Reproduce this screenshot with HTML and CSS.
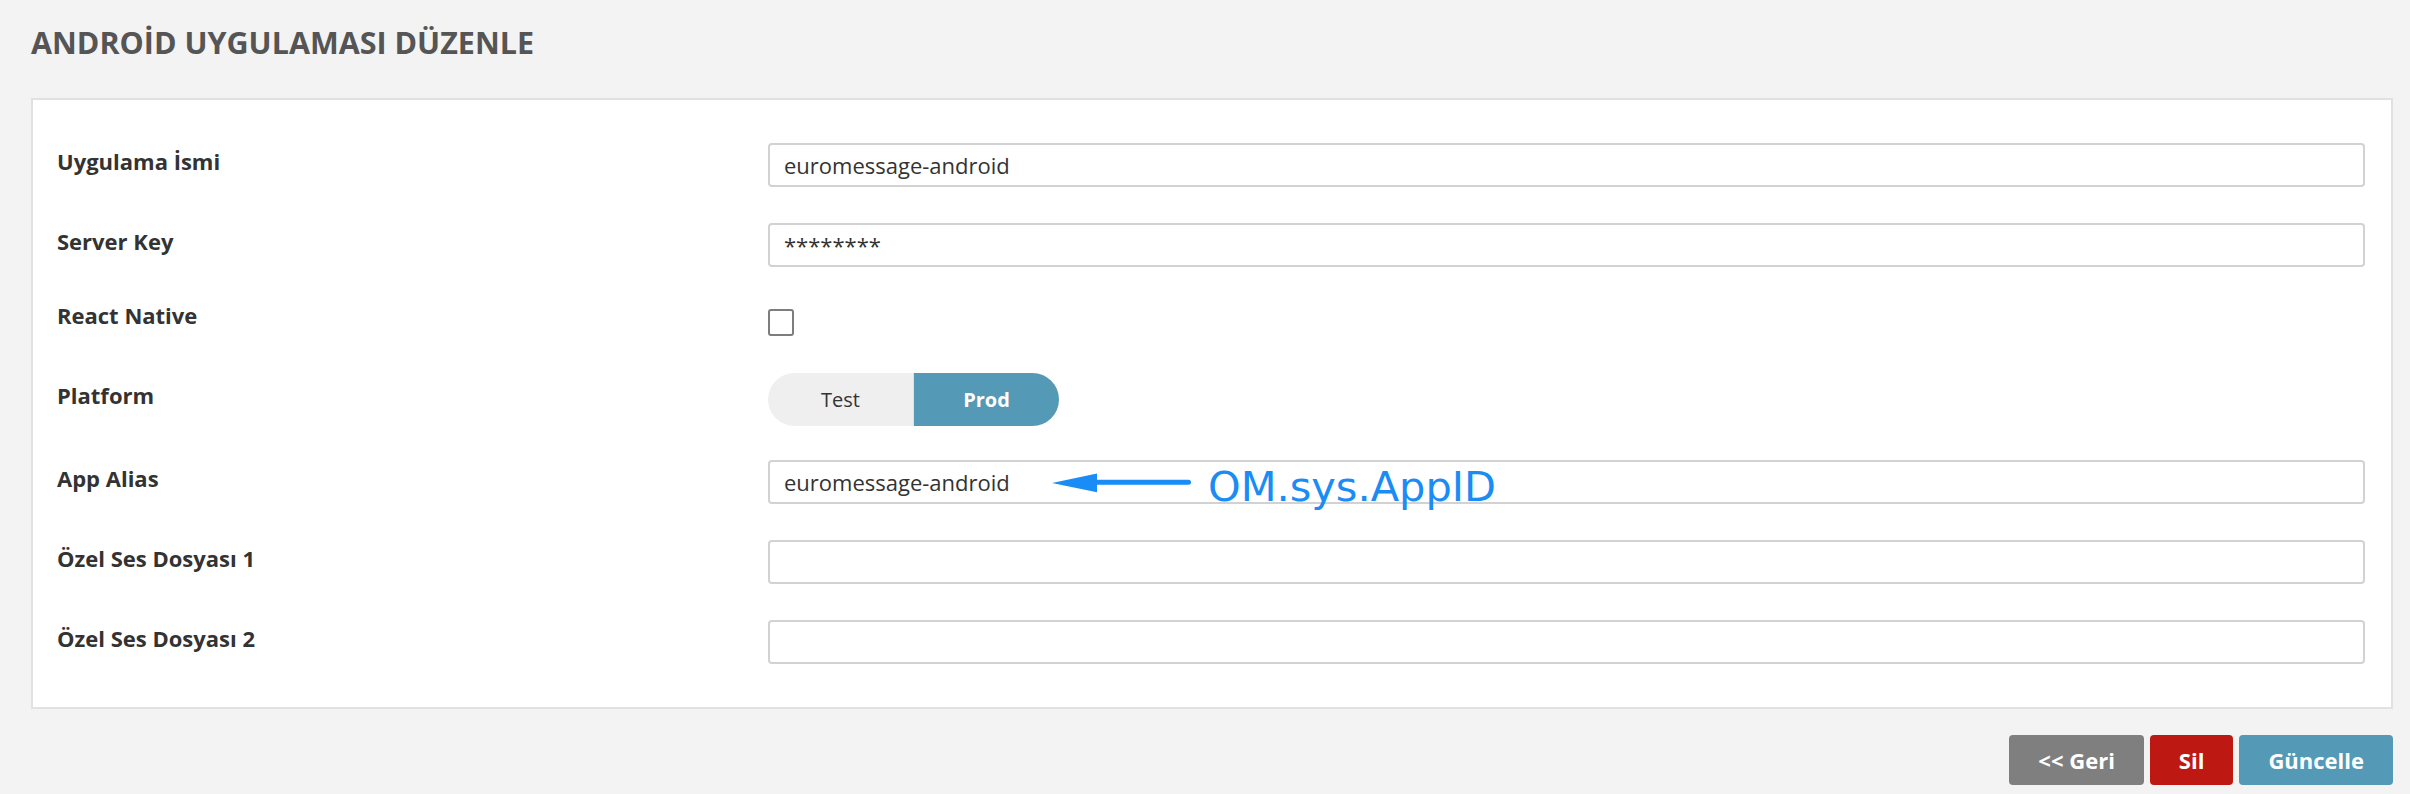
FILE: index.html
```html
<!DOCTYPE html>
<html lang="tr">
<head>
<meta charset="utf-8">
<title>Android Uygulaması Düzenle</title>
<link rel="stylesheet" href="styles.css">
</head>
<body>
<div class="page">
  <h1 class="title">ANDROİD UYGULAMASI DÜZENLE</h1>
  <div class="card">
    <div class="form">
      <div class="row">
        <label class="label">Uygulama İsmi</label>
        <input class="input" type="text" value="euromessage-android">
      </div>
      <div class="row">
        <label class="label">Server Key</label>
        <input class="input" type="text" value="********">
      </div>
      <div class="row row-check">
        <label class="label">React Native</label>
        <div class="control"><input class="checkbox" type="checkbox"></div>
      </div>
      <div class="row row-toggle">
        <label class="label">Platform</label>
        <div class="control">
          <div class="toggle">
            <span class="toggle-opt">Test</span>
            <span class="toggle-opt active">Prod</span>
          </div>
        </div>
      </div>
      <div class="row">
        <label class="label">App Alias</label>
        <div class="field">
          <input class="input" type="text" value="euromessage-android">
          <div class="annotation">
            <svg class="arrow" width="140" height="20" viewBox="0 0 140 20">
              <polygon points="0,10 45,0.6 45,19.2" fill="#1a8cf5"/>
              <line x1="44" y1="9.2" x2="136.5" y2="9.2" stroke="#1a8cf5" stroke-width="5" stroke-linecap="round"/>
            </svg>
            <span class="annotation-text">OM.sys.AppID</span>
          </div>
        </div>
      </div>
      <div class="row">
        <label class="label">Özel Ses Dosyası 1</label>
        <input class="input" type="text" value="">
      </div>
      <div class="row">
        <label class="label">Özel Ses Dosyası 2</label>
        <input class="input" type="text" value="">
      </div>
    </div>
  </div>
  <div class="actions">
    <button class="btn btn-back">&lt;&lt; Geri</button>
    <button class="btn btn-delete">Sil</button>
    <button class="btn btn-update">Güncelle</button>
  </div>
</div>
</body>
</html>
```
FILE: styles.css
```css
* { box-sizing: border-box; }

html, body {
  margin: 0;
  padding: 0;
  background: #f3f3f3;
  font-family: "Open Sans", "Liberation Sans", sans-serif;
  color: #333;
}

.page {
  padding: 22px 17px 0 31px;
}

.title {
  margin: 0;
  font-size: 30.5px;
  line-height: 40px;
  font-weight: 700;
  color: #555;
}

.card {
  margin-top: 36px;
  background: #fff;
  border: 2px solid #e1e1e1;
  padding: 43px 26px 43px 24px;
}

.form {
  display: flex;
  flex-direction: column;
  gap: 36px;
}

.row {
  display: grid;
  grid-template-columns: 711px 1fr;
  align-items: center;
}

.row-check {
  align-items: start;
  margin-top: -3px;
  margin-bottom: 1px;
}
.row-toggle { margin-bottom: -2px; }

.label {
  font-size: 22px;
  line-height: 30px;
  font-weight: 700;
  color: #333;
  margin-bottom: 9px;
}

.row-check .label { margin-bottom: 0; }

.control { display: flex; }

.row-check .control { padding-top: 9px; }

.field { position: relative; }

.input {
  display: block;
  width: 100%;
  height: 44px;
  border: 2px solid #d2d2d2;
  border-radius: 4px;
  padding: 0 14px;
  font-family: "Open Sans", "Liberation Sans", sans-serif;
  font-size: 22px;
  color: #333;
  background: #fff;
  outline: none;
}

.checkbox {
  appearance: none;
  -webkit-appearance: none;
  margin: 0;
  width: 26px;
  height: 27px;
  border: 2px solid #7d7d7d;
  border-radius: 3px;
  background: #fff;
}

.toggle {
  display: flex;
  width: 291px;
  height: 53px;
  border-radius: 27px;
  overflow: hidden;
}

.toggle-opt {
  flex: 1;
  display: flex;
  align-items: center;
  justify-content: center;
  background: #efefef;
  font-size: 20px;
  color: #333;
}

.toggle-opt.active {
  background: #5499b5;
  color: #fff;
  font-weight: 700;
  border-left: 1px solid #d8e6ec;
}

.annotation {
  position: absolute;
  left: 284px;
  top: 3px;
  display: flex;
  align-items: flex-start;
  pointer-events: none;
}

.arrow {
  display: block;
  margin-top: 10px;
}

.annotation-text {
  margin-left: 16px;
  font-family: "DejaVu Sans", sans-serif;
  font-size: 41.5px;
  line-height: 48px;
  color: #1a8cf5;
  white-space: nowrap;
}

.actions {
  display: flex;
  justify-content: flex-end;
  gap: 6px;
  margin-top: 26px;
}

.btn {
  height: 50px;
  padding: 0 29px;
  border: none;
  border-radius: 4px;
  font-family: "Open Sans", "Liberation Sans", sans-serif;
  font-size: 22px;
  font-weight: 700;
  color: #fff;
}

.btn-back { background: #7f7f7f; }
.btn-delete { background: #bd1912; }
.btn-update { background: #5499b5; }
```
